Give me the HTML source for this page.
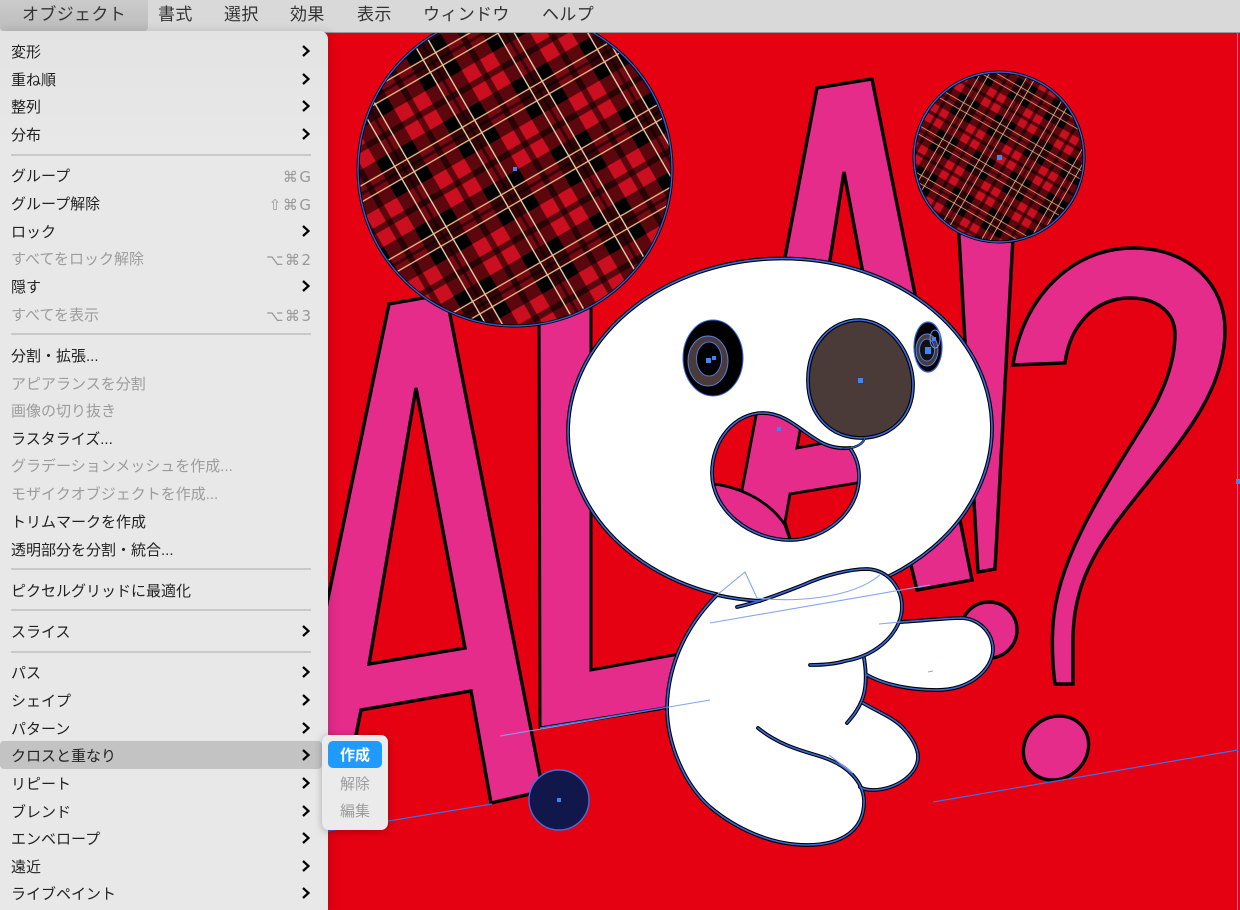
<!DOCTYPE html>
<html lang="ja"><head><meta charset="utf-8"><title>オブジェクト</title>
<style>
html,body{margin:0;padding:0;width:1240px;height:910px;overflow:hidden;background:#e50012}
body{position:relative;font-family:"Liberation Sans","Noto Sans CJK JP",sans-serif}
svg.art{position:absolute;left:0;top:0}
#bar{position:absolute;left:0;top:0;width:1240px;height:32px;background:#d9d9d9;border-bottom:1px solid #9a9a9a}
#bar i{position:absolute;left:0;top:0;width:148px;height:31px;background:linear-gradient(#cbcbcb,#bcbcbc);border-radius:0 0 4px 4px}
#bar span{position:absolute;top:1px;line-height:27px;font-size:17px;color:#333;white-space:nowrap;letter-spacing:.35px}
#menu{position:absolute;left:0;top:31px;width:328px;height:879px;background:linear-gradient(#e3e3e3,#e8e8e8 120px);border-radius:0 8px 0 0;box-shadow:3px 0 10px rgba(0,0,0,.12)}
.r{position:absolute;left:11px;height:28px;line-height:28px;margin-top:1.5px;font-size:15px;color:#222;white-space:nowrap}
.d{color:#9c9c9c}
.k{position:absolute;right:15.5px;height:28px;line-height:28px;margin-top:1.5px;font-size:15px;color:#999;white-space:nowrap;font-family:"DejaVu Sans","Liberation Sans",sans-serif;letter-spacing:1.5px}
.s{position:absolute;left:11px;width:300px;height:1.5px;background:#c9c9c9}
.hl{position:absolute;left:0;top:710px;width:322px;height:28px;background:#c3c3c3;border-radius:4px}
svg.ch{position:absolute;left:0;top:0}
#sub{position:absolute;left:322px;top:735px;width:66px;height:95px;background:#ebebeb;border-radius:7px;box-shadow:0 1px 8px rgba(0,0,0,.28)}
#sub b{position:absolute;left:6px;top:6px;width:54px;height:27px;background:#1f9bff;border-radius:5px;color:#fff;font-size:15px;font-weight:700;text-align:center;line-height:29px}
#sub span{position:absolute;left:6px;width:54px;color:#9c9c9c;font-size:15px;text-align:center;line-height:29px}
</style></head><body>
<svg class="art" width="1240" height="910" viewBox="0 0 1240 910" xmlns="http://www.w3.org/2000/svg">
<defs>
<g id="st">
<rect x="-10" y="-50" width="20" height="100" fill="#000" opacity=".42"/>
<rect x="-27" y="-50" width="17" height="100" fill="#000" opacity=".55"/>
<rect x="10" y="-50" width="17" height="100" fill="#000" opacity=".55"/>
<rect x="-2" y="-50" width="4" height="100" fill="#000" opacity=".5"/>
<rect x="-50" y="-50" width="4" height="100" fill="#000" opacity=".55"/>
<rect x="46" y="-50" width="4" height="100" fill="#000" opacity=".55"/>
</g>
<g id="tile">
<rect x="-50" y="-50" width="100" height="100" fill="#cb0f20"/>
<use href="#st"/><use href="#st" transform="rotate(90)"/>
<g fill="#000">
<rect x="-27" y="-27" width="17" height="17"/><rect x="10" y="-27" width="17" height="17"/>
<rect x="-27" y="10" width="17" height="17"/><rect x="10" y="10" width="17" height="17"/>
</g>
<rect x="-10" y="-50" width="1.6" height="100" fill="#ece6b4"/>
<rect x="8.4" y="-50" width="1.6" height="100" fill="#ece6b4"/>
<rect x="-50" y="-10" width="100" height="1.6" fill="#eec48c"/>
<rect x="-50" y="8.4" width="100" height="1.6" fill="#eec48c"/>
</g>
<pattern id="pb" patternUnits="userSpaceOnUse" x="0" y="0" width="100" height="100" patternTransform="translate(472,130) rotate(-30) scale(.78) translate(-50,-50)"><use href="#tile" transform="translate(50,50)"/></pattern>
<pattern id="ps" patternUnits="userSpaceOnUse" x="0" y="0" width="100" height="100" patternTransform="translate(965,108) rotate(30) scale(.42) translate(-50,-50)"><use href="#tile" transform="translate(50,50)"/></pattern>
<path id="mp" d="M712,473 C712,440 735,413 763,413 C785,413 800,430 817,440 C826,446 837,449 850,448 C857,458 859,467 859,477 C859,512 825,540 790,540 C750,540 712,510 712,473Z"/>
<clipPath id="mc"><use href="#mp"/></clipPath>
<g id="bl" fill="none" stroke-linecap="round">
<path d="M717,595 C690,622 668,660 667,707 C667,745 685,785 710,807 C735,828 770,845 807,845 C842,845 865,830 864,800 C863,780 845,766 830,760 C815,753 785,750 758,728"/>
<path d="M737,607 C760,602 785,592 803,585 C825,575 850,569 867,569 C890,570 902,590 902,607 C902,630 880,655 845,661 C835,664 825,665 810,665"/>
<path d="M900,622 C920,621 945,618 963,618 C982,620 993,635 993,650 C992,670 970,690 937,690 C910,690 885,685 867,675"/>
<path d="M864,658 C867,675 866,690 862,700 C858,710 853,716 847,723"/>
<path d="M863,703 C880,713 895,718 905,730 C914,740 918,750 918,757 C918,775 895,790 873,790 C868,790 863,789 860,787"/>
<path d="M717,595 C730,598 745,600 760,601"/>
</g>
</defs>
<rect width="1240" height="910" fill="#e50012"/>
<rect x="1237" y="33" width="1" height="877" fill="#ee5aa0"/>
<g fill="#e62c8b" stroke="#000" stroke-width="3.4" stroke-linejoin="miter">
<path fill-rule="evenodd" d="M389,304 L446,294 L543,791 L491,803 L471,691 L361,710 L338,825 L200,850 L280,830 L389,304Z M416,388 L369,664 L465,648Z"/>
<path stroke-width="3" d="M539,290 L591,290 L591,670 L690,652 L690,704 L540,728Z"/>
<path fill-rule="evenodd" d="M817,88 L872,79 L972,580 L917,590 L890,478 L790,494 L775,570 L722,590 Z M844,172 L800,448 L893,433Z"/>
<path d="M957,200 L1015,200 L995,569 L978,572Z"/>
<path d="M1013,365 C1022,300 1070,248 1133,248 C1190,248 1225,285 1225,330 C1225,385 1190,430 1153,476 C1110,530 1073,570 1073,640 L1073,684 L1055,684 C1052,660 1052,640 1053,625 C1057,560 1100,495 1147,419 C1165,390 1175,360 1175,334 C1175,315 1160,298 1130,298 C1095,298 1070,325 1065,363Z"/>
<ellipse cx="1056" cy="748" rx="34" ry="30.5" transform="rotate(-40 1056 748)"/>
<circle cx="989" cy="630" r="28"/>
</g>
<circle cx="515" cy="169" r="157" fill="url(#pb)" stroke="#000" stroke-width="3"/>
<circle cx="515" cy="169" r="157" fill="none" stroke="#2f5fd6" stroke-width="1.4"/>
<circle cx="999" cy="157" r="85" fill="url(#ps)" stroke="#000" stroke-width="3"/>
<circle cx="999" cy="157" r="85" fill="none" stroke="#2f5fd6" stroke-width="1.4"/>
<circle cx="559" cy="800" r="30" fill="#11174a" stroke="#3f6fe0" stroke-width="1.4"/>
<g transform="rotate(-1.5 780 430)">
<ellipse cx="780" cy="430" rx="212" ry="171.5" fill="#fff" stroke="#000" stroke-width="3.8"/>
<ellipse cx="780" cy="430" rx="212" ry="171.5" fill="none" stroke="#3a68dc" stroke-width="1.6"/>
</g>
<!-- mouth -->
<g clip-path="url(#mc)">
<rect x="700" y="400" width="170" height="150" fill="#e62c8b"/>
<g stroke="#000" stroke-width="2.8" fill="#e50012">
<path d="M700,395 L758,405 L742,490 L700,490Z"/>
<path d="M801,425 L797,448 L840,440 L830,420Z"/>
<path d="M875,480 L790,494 L785,522 L793,548 L875,548Z"/>
<path fill="#e62c8b" d="M705,483 C745,486 772,505 785,525 L793,548 L705,548Z"/>
</g>
</g>
<use href="#mp" fill="none" stroke="#000" stroke-width="3.8"/>
<use href="#mp" fill="none" stroke="#3a68dc" stroke-width="1.6"/>
<!-- nose -->
<path d="M808,380 C808,345 830,320 860,320 C892,322 913,355 913,385 C913,418 890,437 862,438 C830,438 808,415 808,380Z" fill="#4a3a38" stroke="#000" stroke-width="3.8"/>
<path d="M808,380 C808,345 830,320 860,320 C892,322 913,355 913,385 C913,418 890,437 862,438 C830,438 808,415 808,380Z" fill="none" stroke="#3a68dc" stroke-width="1.6"/>
<path d="M842,448 C852,449 862,446 865,438" fill="none" stroke="#000" stroke-width="2.4"/>
<path d="M842,448 C852,449 862,446 865,438" fill="none" stroke="#3a68dc" stroke-width="1.1"/>
<!-- eyes -->
<ellipse cx="713" cy="358" rx="30" ry="38" fill="#000" stroke="#3a68dc" stroke-width="1"/>
<ellipse cx="708" cy="361" rx="20" ry="25" fill="#4a3a38" stroke="#5a80e6" stroke-width="1"/>
<ellipse cx="709" cy="359" rx="12.5" ry="17" fill="#000" stroke="#4a78e8" stroke-width="1"/>
<ellipse cx="928" cy="347" rx="14" ry="25" fill="#000" stroke="#2f66e0" stroke-width="1.2"/>
<ellipse cx="927" cy="350" rx="11" ry="16" fill="#4a3a38" stroke="#5a80e6" stroke-width="1"/>
<ellipse cx="927" cy="350" rx="7.5" ry="11" fill="#111" stroke="#4a78e8" stroke-width="1"/>
<ellipse cx="935" cy="339" rx="5" ry="9" fill="none" stroke="#6f94ee" stroke-width="1"/>
<!-- body -->
<g fill="#fff">
<path d="M900,622 C920,621 945,618 963,618 C982,620 993,635 993,650 C992,670 970,690 937,690 C910,690 885,685 867,675 L860,655 L885,625Z"/>
<path d="M863,703 C880,713 895,718 905,730 C914,740 918,750 918,757 C918,775 895,790 873,790 C868,790 863,789 860,787 L830,758 L845,700Z"/>
<path d="M717,595 L722,592 L770,592 L770,596 C785,592 803,585 803,585 C825,575 850,569 867,569 C890,570 902,590 902,607 C902,630 885,650 864,658 C867,675 866,700 858,730 L864,800 C865,830 842,845 807,845 C770,845 735,828 710,807 C685,785 667,745 667,707 C668,660 690,622 717,595Z"/>
</g>
<use href="#bl" stroke="#000" stroke-width="3.8"/>
<use href="#bl" stroke="#3a68dc" stroke-width="1.6"/>
<!-- guides -->
<g fill="none" stroke="#86a6ee" stroke-width="1.1">
<path d="M710,623 L930,585"/>
<path d="M717,595 L745,572 L757,598"/>
<path d="M757,598 C790,602 850,600 880,575"/>
<path d="M500,736 L710,700"/>
<path d="M879,624 L900,622"/>
<path d="M928,672 L933,671"/>
<path d="M829,755 L853,773"/>
</g>
<g fill="none" stroke="#3f6fe6" stroke-width="1.2">
<path d="M328,831 L492,804"/>
<path d="M540,728 L668,707"/>
<path d="M933,802 L1238,750"/>
</g>
<g fill="#3d86f5">
<rect x="513" y="167" width="4" height="4"/>
<rect x="997" y="155" width="5" height="5"/>
<rect x="858" y="378" width="5" height="5"/>
<rect x="777" y="427" width="4" height="4"/>
<rect x="557" y="798" width="4" height="4"/>
<rect x="706" y="358" width="5" height="5"/>
<rect x="712" y="356" width="4" height="4"/>
<rect x="925" y="347" width="6" height="7"/>
<rect x="932" y="337" width="4" height="4"/>
<rect x="1236" y="479" width="4" height="5"/>
</g>
</svg>

<div id="bar"><i></i>
<span style="left:22px">オブジェクト</span>
<span style="left:158px">書式</span>
<span style="left:224px">選択</span>
<span style="left:290px">効果</span>
<span style="left:357px">表示</span>
<span style="left:423px">ウィンドウ</span>
<span style="left:542px">ヘルプ</span>
</div>

<div id="menu">
<div class="hl"></div>
<div class="r" style="top:6px">変形</div>
<div class="r" style="top:34px">重ね順</div>
<div class="r" style="top:61px">整列</div>
<div class="r" style="top:89px">分布</div>
<div class="s" style="top:123px"></div>
<div class="r" style="top:130px">グループ</div><div class="k" style="top:130px">⌘G</div>
<div class="r" style="top:158px">グループ解除</div><div class="k" style="top:158px">⇧⌘G</div>
<div class="r" style="top:186px">ロック</div>
<div class="r d" style="top:213px">すべてをロック解除</div><div class="k" style="top:213px">⌥⌘2</div>
<div class="r" style="top:241px">隠す</div>
<div class="r d" style="top:269px">すべてを表示</div><div class="k" style="top:269px">⌥⌘3</div>
<div class="s" style="top:302px"></div>
<div class="r" style="top:310px">分割・拡張...</div>
<div class="r d" style="top:338px">アピアランスを分割</div>
<div class="r d" style="top:365px">画像の切り抜き</div>
<div class="r" style="top:393px">ラスタライズ...</div>
<div class="r d" style="top:420px">グラデーションメッシュを作成...</div>
<div class="r d" style="top:448px">モザイクオブジェクトを作成...</div>
<div class="r" style="top:476px">トリムマークを作成</div>
<div class="r" style="top:504px">透明部分を分割・統合...</div>
<div class="s" style="top:537px"></div>
<div class="r" style="top:545px">ピクセルグリッドに最適化</div>
<div class="s" style="top:578px"></div>
<div class="r" style="top:586px">スライス</div>
<div class="s" style="top:620px"></div>
<div class="r" style="top:627px">パス</div>
<div class="r" style="top:655px">シェイプ</div>
<div class="r" style="top:683px">パターン</div>
<div class="r" style="top:710px">クロスと重なり</div>
<div class="r" style="top:738px">リピート</div>
<div class="r" style="top:766px">ブレンド</div>
<div class="r" style="top:793px">エンベロープ</div>
<div class="r" style="top:821px">遠近</div>
<div class="r" style="top:848px">ライブペイント</div>
<svg class="ch" width="328" height="879" viewBox="0 31 328 879" fill="none" stroke="#000" stroke-width="2.2">
<path d="M303,46 L308.5,51 L303,56M303,74 L308.5,79 L303,84M303,101 L308.5,106 L303,111M303,129 L308.5,134 L303,139M303,226 L308.5,231 L303,236M303,281 L308.5,286 L303,291M303,626 L308.5,631 L303,636M303,667 L308.5,672 L303,677M303,695 L308.5,700 L303,705M303,723 L308.5,728 L303,733M303,750 L308.5,755 L303,760M303,778 L308.5,783 L303,788M303,806 L308.5,811 L303,816M303,833 L308.5,838 L303,843M303,861 L308.5,866 L303,871M303,888 L308.5,893 L303,898"/>
</svg>
</div>
<div id="sub"><b>作成</b><span style="top:35px">解除</span><span style="top:62px">編集</span></div>
</body></html>
